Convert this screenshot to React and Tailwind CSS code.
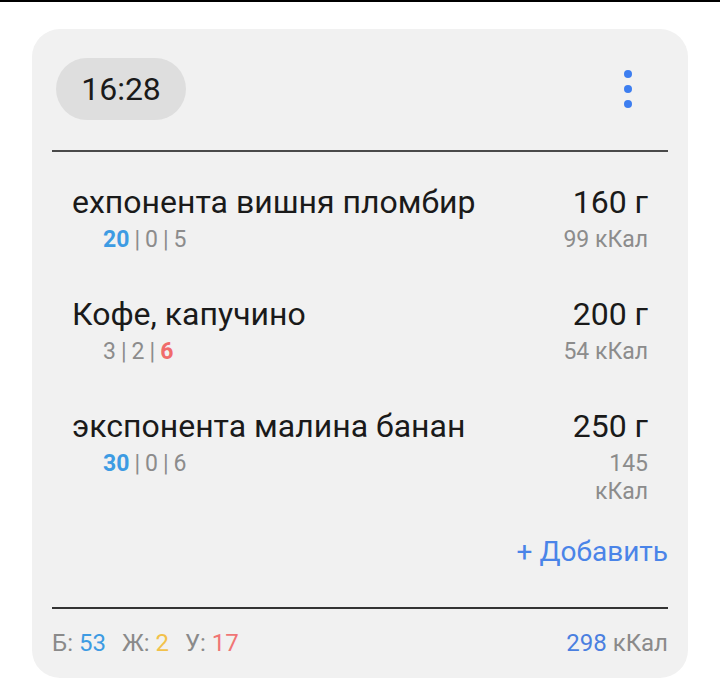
export default function App() {
  const items = [
    { name: "ехпонента вишня пломбир", b: "20", z: "0", u: "5", hl: "b", w: "160 г", kcal: ["99 кКал"] },
    { name: "Кофе, капучино", b: "3", z: "2", u: "6", hl: "u", w: "200 г", kcal: ["54 кКал"] },
    { name: "экспонента малина банан", b: "30", z: "0", u: "6", hl: "b", w: "250 г", kcal: ["145", "кКал"] },
  ];
  const font = { fontFamily: "Roboto, 'Noto Sans', sans-serif" };
  return (
    <div className="w-[720px] h-[694px] bg-white border-t-2 border-black" style={font}>
      <div className="ml-[32px] mt-[27px] w-[656px] h-[649px] rounded-[28px] bg-[#f1f1f1] px-[20px] pt-[29px] flex flex-col">
        <div className="flex items-center justify-between pl-[4px] pr-[36px]">
          <div className="w-[130px] h-[62px] rounded-full bg-[#dedede] flex items-center justify-center text-[32px] text-[#1a1a1a]">
            16:28
          </div>
          <div className="flex flex-col gap-[7px]">
            <span className="block w-[8px] h-[8px] rounded-full bg-[#3d7ef0]" />
            <span className="block w-[8px] h-[8px] rounded-full bg-[#3d7ef0]" />
            <span className="block w-[8px] h-[8px] rounded-full bg-[#3d7ef0]" />
          </div>
        </div>
        <div className="mt-[30px] h-[2px] bg-[#4a4a4a]" />
        <div className="flex flex-col gap-[41px] mt-[31px] px-[20px]">
          {items.map((it, i) => (
            <div key={i} className="flex justify-between">
              <div className="flex flex-col">
                <div className="text-[32px] leading-[38px] text-[#1a1a1a]">{it.name}</div>
                <div className="mt-[5px] pl-[31px] text-[23px] leading-[28px] text-[#8c8c8c]">
                  <span className={it.hl === "b" ? "font-bold text-[#3d9be3]" : ""}>{it.b}</span>
                  <span className="mx-[5px]">|</span>
                  <span>{it.z}</span>
                  <span className="mx-[5px]">|</span>
                  <span className={it.hl === "u" ? "font-bold text-[#f06b6b]" : ""}>{it.u}</span>
                </div>
              </div>
              <div className="flex flex-col items-end">
                <div className="text-[32px] leading-[38px] text-[#1a1a1a]">{it.w}</div>
                <div className="mt-[5px] flex flex-col items-end text-[23px] leading-[28px] text-[#8c8c8c]">
                  {it.kcal.map((k, j) => (
                    <span key={j}>{k}</span>
                  ))}
                </div>
              </div>
            </div>
          ))}
        </div>
        <div className="mt-[28px] self-end text-[28px] leading-[36px] text-[#4a84e8]">+ Добавить</div>
        <div className="mt-[37px] h-[2px] bg-[#333333]" />
        <div className="mt-[19px] flex justify-between text-[24px] leading-[30px] text-[#8a8a8a]">
          <div className="flex gap-[16px]">
            <span>Б: <span className="text-[#3d9be3]">53</span></span>
            <span>Ж: <span className="text-[#f2c14a]">2</span></span>
            <span>У: <span className="text-[#f07575]">17</span></span>
          </div>
          <div>
            <span className="text-[#4a7fe0]">298</span> кКал
          </div>
        </div>
      </div>
    </div>
  );
}
